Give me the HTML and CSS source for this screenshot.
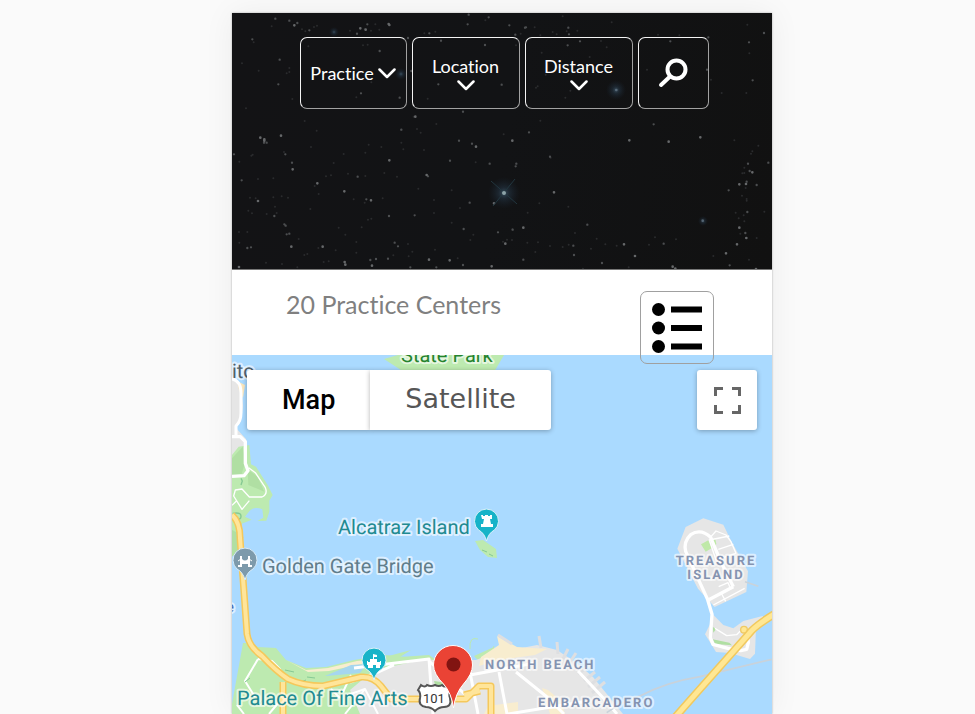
FILE: index.html
```html
<!DOCTYPE html>
<html lang="en">
<head>
<meta charset="utf-8">
<meta name="viewport" content="width=device-width, initial-scale=1">
<title>Practice Centers</title>
<link rel="stylesheet" href="styles.css">
</head>
<body>
<main class="card">
  <header class="hero">
    <svg class="sky" viewBox="232 13 540 256" preserveAspectRatio="xMidYMin slice" aria-hidden="true">
      <defs>
        <radialGradient id="glow"><stop offset="0" stop-color="#53758f" stop-opacity=".6"/><stop offset=".35" stop-color="#2c4459" stop-opacity=".4"/><stop offset="1" stop-color="#1a2a3c" stop-opacity="0"/></radialGradient>
      </defs>
      <g transform="translate(222 0) scale(.33333)">
        <path class="star faint" d="M60 190h0M95 127h0M149 79h0M240 88h0M285 77h0M276 81h0M250 94h0M194 220h0M202 204h0M202 216h0M211 297h0M248 363h0M284 392h0M259 139h0M437 134h0M423 136h0M403 292h0M448 247h0M110 212h0M384 92h0M447 92h0M472 89h0M460 73h0M428 88h0M617 296h0M643 372h0M596 398h0M585 387h0M538 389h0M790 61h0M640 95h0M607 100h0M575 350h0M72 325h0"/>
        <path class="star" d="M160 56h0M202 62h0M226 69h0M91 118h0M262 91h0M173 179h0M169 253h0M405 101h0M436 73h0M473 153h0M417 280h0M533 293h0M568 213h0M558 114h0M622 100h0M657 122h0M789 135h0M800 52h0M740 44h0M737 73h0M649 253h0M723 335h0M538 389h0"/>
        <path class="star big" d="M217 76h0M415 85h0M431 89h0M500 72h0M502 75h0M580 350h0M115 413h0M177 407h0M127 418h0"/>
      </g>
      <g transform="translate(500 0) scale(.33333)">
        <path class="star faint" d="M62 101h0M104 82h0M121 106h0M158 96h0M170 103h0M200 94h0M232 92h0M335 67h0M303 123h0M125 158h0M269 171h0M137 224h0M211 272h0M196 293h0M108 263h0M113 259h0M441 209h0M474 104h0M538 106h0M665 279h0M739 279h0M742 74h0M748 160h0M633 239h0M320 142h0M48 136h0M11 403h0M121 362h0M188 49h0"/>
        <path class="star" d="M28 76h0M46 104h0M75 83h0M78 82h0M205 83h0M207 103h0M240 124h0M203 136h0M5 254h0M511 124h0M625 112h0M621 209h0M747 127h0M792 99h0M758 241h0M461 373h0M87 397h0"/>
        <path class="star big" d="M601 412h0M349 270h0"/>
      </g>
      <g transform="translate(222 140) scale(.33333)">
        <path class="star faint" d="M52 65h0M88 47h0M92 44h0M186 36h0M267 21h0M365 42h0M335 69h0M440 14h0M478 21h0M538 8h0M544 28h0M430 38h0M606 30h0M108 117h0M154 115h0M312 109h0M327 106h0M378 101h0M430 108h0M487 99h0M525 110h0M278 138h0M290 162h0M84 173h0M101 175h0M154 172h0M179 169h0M198 173h0M159 200h0M79 212h0M90 220h0M134 222h0M164 219h0M265 207h0M395 178h0M428 188h0M482 175h0M589 146h0M636 180h0M689 151h0M714 204h0M438 239h0M448 236h0M350 263h0M419 262h0M370 284h0M230 297h0M403 306h0M52 308h0M51 276h0M76 276h0M247 345h0M256 342h0M289 324h0M341 331h0M403 338h0M514 346h0M560 349h0M571 335h0M558 312h0M639 329h0M707 355h0M754 284h0M745 300h0M689 248h0M636 219h0M761 67h0M132 368h0M180 372h0M226 382h0M305 366h0M320 364h0"/>
        <path class="star" d="M36 43h0M190 43h0M210 68h0M59 121h0M87 322h0M76 324h0M407 110h0M433 178h0M618 109h0M684 62h0M803 71h0M743 188h0M725 267h0M828 277h0M578 226h0M501 228h0M157 228h0M187 253h0M191 257h0M194 283h0M202 281h0M518 308h0M528 319h0M445 360h0M462 357h0M498 356h0M643 382h0M565 382h0M723 375h0M126 8h0M134 8h0M711 2h0M750 11h0"/>
        <path class="star big" d="M212 88h0M286 130h0M367 154h0M108 183h0M447 181h0M502 61h0M614 105h0M762 20h0M816 190h0M208 320h0M302 320h0M368 366h0M370 374h0M450 377h0M621 359h0M683 361h0M809 379h0M51 381h0M127 2h0"/>
      </g>
      <g transform="translate(500 140) scale(.33333)">
        <path class="star faint" d="M152 53h0M118 190h0M205 200h0M83 218h0M37 268h0M36 300h0M21 299h0M9 305h0M82 308h0M114 307h0M106 336h0M150 318h0M188 321h0M206 314h0M225 279h0M273 326h0M290 296h0M316 313h0M350 317h0M447 314h0M465 292h0M528 298h0M640 348h0M726 167h0M737 144h0M757 34h0M753 41h0M775 17h0M733 83h0M727 100h0M707 218h0M716 235h0M731 226h0M733 244h0M770 294h0M793 215h0M747 359h0M721 281h0M733 99h0M740 177h0M740 182h0M703 1h0M249 386h0M386 382h0"/>
        <path class="star" d="M49 71h0M47 79h0M38 269h0M262 254h0M220 317h0M222 345h0M150 50h0M491 311h0M70 359h0M306 369h0M744 71h0M740 125h0M749 93h0M686 151h0M805 68h0M742 216h0M736 279h0M689 376h0M770 135h0"/>
        <path class="star big" d="M37 2h0M388 1h0M506 5h0M162 157h0M70 263h0M16 311h0M372 313h0M405 348h0M518 380h0M526 386h0M711 313h0M678 340h0M739 294h0M718 263h0M718 133h0M738 132h0M757 97h0M768 387h0M608 242h0"/>
      </g>
      <circle cx="504" cy="193" r="16" fill="url(#glow)"/>
      <path class="flare" d="M491 181l26 23M515 179l-22 27"/>
      <circle cx="504" cy="193" r="2" fill="#8da3a8"/>
      <circle cx="616" cy="90" r="10" fill="url(#glow)"/>
      <circle cx="334" cy="32" r="5" fill="url(#glow)"/>
      <circle cx="401" cy="74" r="6" fill="url(#glow)"/>
      <circle cx="703" cy="221" r="5" fill="url(#glow)"/>
    </svg>
    <nav class="filters" aria-label="Filters">
      <button class="filter filter-inline" type="button">Practice
        <svg class="chevron" viewBox="0 0 18 11" aria-hidden="true"><path d="M1.500 1.500L9 9l7.500-7.500"/></svg></button>
      <button class="filter" type="button">Location
        <svg class="chevron" viewBox="0 0 18 11" aria-hidden="true"><path d="M1.500 1.500L9 9l7.500-7.500"/></svg></button>
      <button class="filter" type="button">Distance
        <svg class="chevron" viewBox="0 0 18 11" aria-hidden="true"><path d="M1.500 1.500L9 9l7.500-7.500"/></svg></button>
      <button class="filter filter-search" type="button" aria-label="Search">
        <svg class="glass" viewBox="0 0 30 30" aria-hidden="true"><circle cx="18.500" cy="11.500" r="9"/><path d="M11.500 19L3 27" stroke-width="4.500"/></svg></button>
    </nav>
  </header>

  <section class="summary">
    <h1 class="count">20 Practice Centers</h1>
    <button class="list-toggle" type="button" aria-label="Show list">
      <svg viewBox="0 0 50 50" aria-hidden="true"><circle cx="6.500" cy="6.500" r="6.500"/><circle cx="6.500" cy="25" r="6.500"/><circle cx="6.500" cy="43.500" r="6.500"/><path d="M19 3.500h31v6H19zM19 22h31v6H19zM19 40.500h31v6H19z"/></svg>
    </button>
  </section>

  <section class="map" aria-label="Map">
    <svg class="tiles" viewBox="232 355 540 359" preserveAspectRatio="xMidYMin slice">
      <path class="park" d="M384 359l14-4h106l-10 17h-90z"/>
      <!-- Marin headlands -->
      <path class="land" d="M232 376l9 8 2 22-2 15-5 7 10 11 3 18-17 20z"/>
      <path fill="#fbe7bd" d="M237 381l8 4-2 13-4-8z"/>
      <g transform="translate(226 430) scale(.33333)">
        <path class="park" d="M18 75l20-25 32-5 5 58 15 7 35 55 15 30-10 17v33l-9 27-27 1 18-10-3-25q-22-10-38 4l-14 18 20 9-30 12-4 52-19 37H18z"/>
        <path class="park-dark" d="M18 85l32-35 8 45-12 40-28 8zM18 300l20 10 3 50-23 20zM65 118l30 22 20 45-48-20z"/>
        <path class="road thick" d="M18 20h25l15 15v65l8 22-12 15-36 2"/>
        <path class="road thin" d="M68 113l20 15 30 45q8 20-10 28H70l-22-24-20 3-5 18 25 40 22-26M18 226l14-14"/>
        <path class="trees" d="M45 145l4 8-4 12M20 250q30-5 24 14-10 12-20 4"/>
      </g>
      <path class="road" d="M232 379q9 2 9 14v20q0 8-5 13v9"/>
      <!-- San Francisco -->
      <path class="park" d="M250 643l8 4 18 1 10 12 20 8 20-1 28-7 31-5 40 4v55H232v-10l11-61z"/>
      <path class="sand" d="M286 660l20 10 22-2 29-7 28-3-1 3-27 4-28 6-21 1z"/>
      <path fill="#a5d6ef" d="M325 676l26-11 16-1-7 9-34 3z"/>
      <path class="park" d="M370 661l41-11-11 7 29-2 10 7-30 6zM474 656l20-9v11l-14 4z"/>
      <path class="pier-green" d="M478 639q-9-3-8 10M494 646q-2 10-12 11"/>
      <path class="land" d="M374 670l29-6 23-5 15 2 35-1 15-6 12-3 14-2 20-4 20 5 21 14 15 13 30 37H360l-10-24z"/>
      <path class="sand" d="M481 657l18-12-2-9 20 11 30 2-12 6-36 5-20 6z"/>
      <path class="pier" d="M498 635l14 9M539 636l2 12M557 642l1 12M568 649l-5 10M576 653l-8 12M590 665l-12 9M595 672l-11 9M600 677l-12 10M605 682l-13 11"/>
      <path class="sand" d="M542 688l6 2 12 10 5 14h-15zM488 706l30-4v12h-34z"/>
      <path class="park-dark" d="M434 681l14 2v12h-10z"/>
      <path class="road" d="M354 668l75-9 4 55M350 682l24-8 20-9M429 661l41 38M470 675l65-12M470 672l8 42M499 672l8 42M516 672l31 25 17 17M578 671l29 31 10 12M508 714l74-12"/>
      <path class="road thin" d="M258 659l14 2 8 8 2 8M258 659l-13 22 10 16M345 696l20-7 13 25M365 689l-20 25M331 689l9 9M237 705l7 9M269 714l10-12M351 675l-8 17"/>
      <path class="trees" d="M245 682l5-4M260 704l3-5M285 670l9 2M297 683l9-3M307 677l8 1"/>
      <path class="hwy-edge" d="M232 515q8 7 8 23l4 54 3 42q2 13 15 22 14 15 26 23 15 7 35 7l38-9q12-1 20 9l10 13h75l13-13h12v30M283 682v32M464 695l16-4"/>
      <path class="hwy" d="M232 515q8 7 8 23l4 54 3 42q2 13 15 22 14 15 26 23 15 7 35 7l38-9q12-1 20 9l10 13h75l13-13h12v30M283 682v32M464 695l16-4"/>
      <!-- Alcatraz -->
      <path class="park" d="M475 541l8-1 13 9 1 9-9-1-8-7z"/>
      <path class="trees" d="M482 550l5 2M489 554l4 2"/>
      <!-- Treasure Island -->
      <g transform="translate(640 490) scale(.33333)">
        <path class="land" d="M190 85l60 19 24 50 50 90-5 62-95 45-50-55-62-120 25-65zM215 370l35 35 30 10 30-22 58-15 5 10-25 23-3 80-15 16-60-18-42-3-15-25-18-28 15-30z"/>
        <path class="park-dark" d="M218 410l10 8-8 10zM218 448l50 10 8 8-50-4z"/>
        <path fill="#bfe9a8" d="M183 163l22-12 10 24-18 10zM210 148l16 0 3 14-6 12z"/>
        <path class="road thick" d="M280 290l-75 40M280 290l-40-80-28-68q-30-28-60-8-22 20-15 50l66 145 13 44-5 70 8 20 45 12 38 7 18-4 5-20-3-28"/>
        <path class="road thin" d="M213 140l15-17 30 12 15 20 15 35-60 20-20-60 60-12M235 178l45-15M220 345l94-50M245 312l12 22M236 290l28-12 8 18M225 415l35 22 30-3 10-10"/>
        <path d="M315 275l40 14" class="ferry"/>
        <path d="M-100 668l40-26 60-24q80-42 180-58l215-52" class="ferry"/>
        <circle cx="312" cy="419" r="10" fill="#ffe793" stroke="#efca65" stroke-width="4"/>
        <path class="bridge-edge" d="M98 690l75-85 155-175q15-20 67-53l30-20"/>
        <path class="bridge" d="M98 690l75-85 155-175q15-20 67-53l30-20"/>
      </g>
      <!-- Place pins -->
      <path fill="#7d9aab" stroke="#d7ecfa" d="M245 580q-2-8-8-11a12 12 0 1 1 16 0q-6 3-8 11z"/>
      <path class="glyph" d="M238 567v-2h2v-9h2v3q3 3 6 0v-3h2v9h2v2h-4v-3h-6v3z"/>
      <path class="strut" d="M241 559l-3 2M249 559l3 2"/>
      <g fill="#17b3c8" stroke="#dcf2fa" stroke-width="1">
        <path d="M486.500 541q-2-8-8-11a12 12 0 1 1 16 0q-6 3-8 11z"/>
        <path d="M374 680q-2-8-8-11a12 12 0 1 1 16 0q-6 3-8 11z"/>
      </g>
      <path class="glyph" d="M481 515h2v1h2v-1h3v1h2v-1h2v4h-2l1 5h2v3h-12v-3h2l1-5h-2z"/>
      <path class="glyph" d="M373 654l4 1v2h-3v2h3v3h3v-1h1v4h-1v3h-4v-3h-3v3h-5v-3h-1v-4h1v1h2v-3h3z"/>
      <path d="M421 685q4 3 6 0 4 2 8 0 4 2 7 0 3 3 6 0l4 5q-4 4-2 8 2 9-6 9-5 0-9 4-4-4-9-4-8-1-6-9 1-5-2-8z" fill="#fff" stroke="#555" stroke-width="2"/>
      <text class="shield" x="423" y="703">101</text>
      <g class="label">
        <text class="park-name" x="401" y="362">State Park</text>
        <text class="town" x="232" y="378">ito</text>
        <text class="poi" x="338" y="534">Alcatraz Island</text>
        <text class="landmark" x="262" y="573">Golden Gate Bridge</text>
        <text class="poi" x="237" y="705">Palace Of Fine Arts</text>
        <text class="beach" x="226" y="612">e</text>
        <text class="district" x="716" y="565" text-anchor="middle">TREASURE<tspan x="716" dy="14">ISLAND</tspan></text>
        <text class="district" x="485" y="669">NORTH BEACH</text>
        <text class="district" x="538" y="707">EMBARCADERO</text>
      </g>
      <path d="M453.500 708q-2-15-10-24-10-10-10-19a19.500 19.500 0 0 1 39 0q0 9-9 19-8 9-10 24z" fill="#ea4335" stroke="#fff" stroke-width="1"/>
      <circle cx="453.500" cy="664.500" r="7" fill="#811411"/>
    </svg>
    <div class="controls">
      <div class="map-types">
        <button class="type type-active" type="button">Map</button>
        <button class="type" type="button">Satellite</button>
      </div>
      <button class="fullscreen" type="button" aria-label="Toggle fullscreen">
        <svg viewBox="0 0 27 27" aria-hidden="true"><path d="M1.500 9V1.500H9M18 1.500h7.500V9M25.500 18v7.500H18M9 25.500H1.500V18"/></svg>
      </button>
    </div>
  </section>
</main>
</body>
</html>
```
FILE: styles.css
```css
* { box-sizing: border-box; }

body {
  margin: 0;
  height: 100vh;
  overflow: hidden;
  padding: 13px 0 0 29px;
  background: #fafafa;
  font-family: Lato, "Liberation Sans", sans-serif;
  font-variant-ligatures: none;
}

button {
  font: inherit;
  font-variant-ligatures: none;
  cursor: pointer;
}

.card {
  display: flex;
  flex-direction: column;
  max-width: 540px;
  height: 100%;
  margin: 0 auto;
  background: #fff;
  box-shadow: 0 0 2px rgba(0, 0, 0, .3), 0 0 30px rgba(0, 0, 0, .06);
}

/* Night-sky header */
.hero {
  position: relative;
  flex: none;
  min-height: 257px;
  padding: 24px 0 0 4px;
  background: linear-gradient(100deg, #131315, #121315 50%, #111);
  border-bottom: 1px solid #777;
}

.sky {
  position: absolute;
  inset: 0;
  width: 100%;
  height: 100%;
}

.star {
  fill: none;
  stroke: #4c4e50;
  stroke-width: 7;
  stroke-linecap: round;
}
.star.faint { stroke: #2a2b2d; stroke-width: 6; }
.star.big { stroke: #66686a; stroke-width: 8; }
.flare { stroke: #22363f; stroke-width: 1; fill: none; }

.filters {
  position: relative;
  display: flex;
  justify-content: center;
  gap: 5px;
}

.filter {
  display: flex;
  flex-direction: column;
  align-items: center;
  justify-content: center;
  gap: 4px;
  width: 108px;
  height: 72px;
  padding: 0;
  color: #fff;
  background: transparent;
  border: 1px solid;
  border-color: #f4f4f4 #a2a2a2 #a2a2a2 #f4f4f4;
  border-radius: 7px;
  font-size: 18px;
  line-height: 20px;
}
.filter-inline { flex-direction: row; width: 107px; }
.filter-search { width: 71px; }

.chevron { width: 18px; height: 11px; }
.chevron path {
  fill: none;
  stroke: #fff;
  stroke-width: 2.5;
  stroke-linecap: round;
  stroke-linejoin: round;
}

.glass { width: 30px; height: 30px; }
.glass circle, .glass path {
  fill: none;
  stroke: #fff;
  stroke-width: 4;
  stroke-linecap: round;
}

/* Result count and list switch */
.summary {
  position: relative;
  z-index: 1;
  flex: none;
  display: flex;
  justify-content: space-between;
  align-items: flex-start;
  height: 85px;
  padding: 21px 58px 0 54px;
}

.count {
  margin: 0;
  color: #808080;
  font-size: 25px;
  font-weight: 400;
  line-height: 26px;
}

.list-toggle {
  display: grid;
  place-items: center;
  width: 74px;
  height: 73px;
  padding: 0;
  background: transparent;
  border: 1px solid #a0a0a0;
  border-radius: 7px;
}
.list-toggle svg { width: 50px; height: 50px; fill: #000; }

/* Map */
.map {
  position: relative;
  flex: 1;
  min-height: 0;
  overflow: hidden;
  background: #aadaff;
}

.tiles { display: block; width: 100%; height: 100%; }

.land { fill: #e6e6e6; }
.park { fill: #bdeab0; }
.park-dark { fill: #b0dfa3; }
.sand { fill: #f8edcf; }
.trees { fill: none; stroke: #86c994; stroke-width: 1; }
.road { fill: none; stroke: #fff; stroke-width: 3; stroke-linejoin: round; }
.road.thin { stroke-width: 2; }
.road.thick { stroke-width: 10; }
.pier { fill: none; stroke: #dedfe1; stroke-width: 3; }
.pier-green { fill: none; stroke: #bdeab0; stroke-width: 1; }
.ferry { fill: none; stroke: #c9d2da; stroke-width: 5; }
g > .road.thin { stroke-width: 4; }
g > .trees { stroke-width: 4; }
.hwy-edge, .hwy, .bridge-edge, .bridge { fill: none; stroke-linejoin: round; }
.hwy-edge { stroke: #f5c85b; stroke-width: 7; }
.hwy { stroke: #ffe59a; stroke-width: 4; }
.bridge-edge { stroke: #f1c95e; stroke-width: 24; }
.bridge { stroke: #ffe793; stroke-width: 15; }
.glyph { fill: #fff; }
.strut { fill: none; stroke: #fff; stroke-width: 1; }

.label text {
  font-family: Roboto, sans-serif;
  font-size: 20px;
  text-rendering: geometricPrecision;
  stroke: #fff;
  stroke-opacity: .6;
  stroke-width: 4px;
  stroke-linejoin: round;
  paint-order: stroke;
}
.label .poi { fill: #218a91; }
.label .landmark { fill: #607d8b; }
.label .park-name { fill: #24842e; }
.label .town { fill: #50606b; }
.label .beach { fill: #4668b4; font-size: 15px; }
.label .district {
  fill: #8593b0;
  font-size: 13px;
  font-weight: 700;
  letter-spacing: 2px;
}
.shield {
  fill: #333;
  font-family: Roboto, sans-serif;
  font-size: 13px;
}

.controls {
  position: absolute;
  inset: 0 0 auto;
  display: flex;
  justify-content: space-between;
  padding: 15px;
}

.map-types { display: flex; }

.type, .fullscreen {
  height: 60px;
  background: #fff;
  border: 0;
  box-shadow: 0 1px 5px rgba(0, 0, 0, .3);
}

.type {
  padding: 0 35px 2px;
  color: #565656;
  border-radius: 0 3px 3px 0;
  font-family: "DejaVu Sans", sans-serif;
  font-size: 27px;
  line-height: 32px;
}
.type-active {
  padding-bottom: 0;
  color: #000;
  border-radius: 3px 0 0 3px;
  font-family: Roboto, sans-serif;
  font-weight: 500;
}

.fullscreen {
  display: grid;
  place-items: center;
  width: 60px;
  padding: 0;
  border-radius: 3px;
}
.fullscreen svg { width: 27px; height: 27px; }
.fullscreen path { fill: none; stroke: #666; stroke-width: 3; }
```
